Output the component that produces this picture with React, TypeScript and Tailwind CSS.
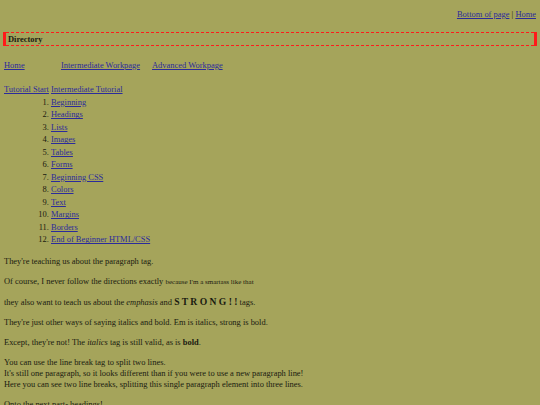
const lessons = [
  "Beginning",
  "Headings",
  "Lists",
  "Images",
  "Tables",
  "Forms",
  "Beginning CSS",
  "Colors",
  "Text",
  "Margins",
  "Borders",
  "End of Beginner HTML/CSS",
];

const link = "text-[#2b2b9c] underline decoration-[#2b2b9c] underline-offset-[1px]";

export default function App() {
  return (
    <div
      className="min-h-[405px] bg-[#a5a45b] px-[4px] pt-[9px] pb-4 text-[8.45px] leading-[10.7px] text-[#1a1a10]"
      style={{ fontFamily: '"Liberation Serif", "Times New Roman", serif' }}
    >
      {/* top links */}
      <div className="text-right leading-[11px]">
        <a className={link}>Bottom of page</a> | <a className={link}>Home</a>
      </div>

      {/* directory header */}
      <div className="mt-[12px] -mx-[1px] flex h-[14px] flex-col border-x-[3px] border-solid border-x-[#ff1a1a]">
        <div className="h-px border-t border-dashed border-t-[#ff1a1a]" />
        <div className="flex-1 pl-[2px] font-bold leading-[12px]">Directory</div>
        <div className="h-px border-t border-dashed border-t-[#ff1a1a]" />
      </div>

      {/* nav */}
      <div className="mt-[14px] flex">
        <span className="w-[57px]">
          <a className={link}>Home</a>
        </span>
        <span className="w-[91px]">
          <a className={link}>Intermediate Workpage</a>
        </span>
        <span>
          <a className={link}>Advanced Workpage</a>
        </span>
      </div>

      <div className="mt-[13px]">
        <a className={link}>Tutorial Start</a> <a className={link}>Intermediate Tutorial</a>
      </div>

      <ol className="mt-[1.5px] list-decimal pl-[47px] leading-[12.5px]">
        {lessons.map((l) => (
          <li key={l}>
            <a className={link}>{l}</a>
          </li>
        ))}
      </ol>

      <p className="mt-[10.4px]">They're teaching us about the paragraph tag.</p>
      <p className="mt-[9.3px]">
        Of course, I never follow the directions exactly{" "}
        <span className="text-[7px]">because I'm a smartass like that</span>
      </p>
      <p className="mt-[9.3px]">
        they also want to teach us about the <em>emphasis</em> and{" "}
        <strong className="text-[9.6px]">S T R O N G ! !</strong> tags.
      </p>
      <p className="mt-[9.3px]">They're just other ways of saying italics and bold. Em is italics, strong is bold.</p>
      <p className="mt-[9.3px]">
        Except, they're not! The <i>italics</i> tag is still valid, as is <b>bold</b>.
      </p>
      <p className="mt-[9.3px]">
        You can use the line break tag to split two lines.
        <br />
        It's still one paragraph, so it looks different than if you were to use a new paragraph line!
        <br />
        Here you can see two line breaks, splitting this single paragraph element into three lines.
      </p>
      <p className="mt-[9.3px]">Onto the next part- headings!</p>
    </div>
  );
}
